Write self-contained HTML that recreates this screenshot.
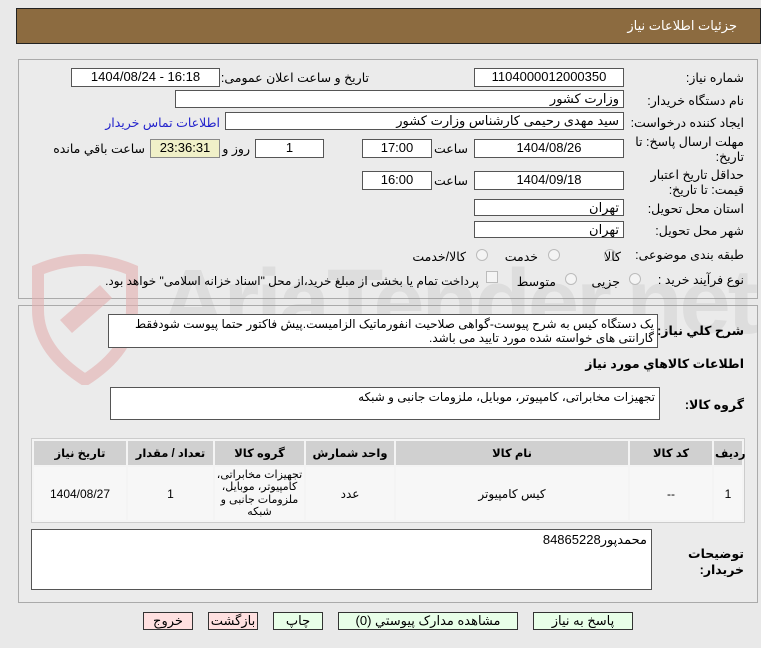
<!DOCTYPE html>
<html><head><meta charset="utf-8"><style>
*{box-sizing:border-box}
body{margin:0;width:761px;height:648px;background:#e9e9e9;font-family:"Liberation Sans","DejaVu Sans",sans-serif;font-size:12px;color:#000;position:relative;overflow:hidden}
.a{position:absolute}
.box{position:absolute;background:#fff;border:1px solid #555;font-size:13px;text-align:center;line-height:16px;white-space:nowrap}
.r{text-align:right;padding-right:4px}
.l{position:absolute;font-size:12.5px;white-space:nowrap;direction:rtl}
.rad{position:absolute;width:12px;height:12px;border:1px solid #bbb;border-radius:50%;background:#f4f4f4}
.btn{position:absolute;top:612px;height:18px;border:1px solid #333;background:#e8ffe8;font-size:13px;text-align:center;line-height:16px}
table{position:absolute;border-collapse:separate;border-spacing:2px;background:#f4f4f4;border:1px solid #ccc;table-layout:fixed}
th{background:#d0d0d0;font-weight:bold;height:24px;font-size:11.5px}
td{background:#f7f7f7;text-align:center;font-size:12px;height:53px;overflow:hidden}
</style></head><body dir="ltr">
<div class="a" style="left:16px;top:8px;width:745px;height:36px;background:#8c6b40;border:1px solid #222"></div>
<div class="l" style="right:24px;top:18px;color:#fff;font-size:13px">جزئیات اطلاعات نیاز</div>

<div class="a" style="left:18px;top:59px;width:740px;height:240px;border:1px solid #aaa;background:#ebebeb"></div>
<div class="a" style="left:18px;top:305px;width:740px;height:298px;border:1px solid #aaa;background:#ebebeb"></div>

<!-- watermark -->
<svg class="a" style="left:20px;top:250px;opacity:0.6" width="130" height="135"><path d="M18 20 Q65 0 112 20 L112 60 Q112 100 65 130 Q18 100 18 60Z" fill="none" stroke="#e3b0b0" stroke-width="12"/><path d="M40 70 L80 35 L92 48 L52 83Z" fill="#e3b0b0"/></svg>
<div class="a" style="left:160px;top:250px;font-size:92px;font-weight:bold;color:rgba(150,150,150,0.16);letter-spacing:-3px">AriaTender.net</div>

<div class="l" style="right:17px;top:70px">شماره نیاز:</div>
<div class="box" style="left:474px;top:68px;width:150px;height:19px">1104000012000350</div>
<div class="l" style="right:392px;top:70px">تاریخ و ساعت اعلان عمومی:</div>
<div class="box" style="left:71px;top:68px;width:149px;height:19px">1404/08/24 - 16:18</div>

<div class="l" style="right:17px;top:93px">نام دستگاه خریدار:</div>
<div class="box r" style="left:175px;top:90px;width:449px;height:18px" dir="rtl">وزارت کشور</div>

<div class="l" style="right:17px;top:115px">ایجاد کننده درخواست:</div>
<div class="box r" style="left:225px;top:112px;width:399px;height:18px" dir="rtl">سید مهدی رحیمی کارشناس وزارت کشور</div>
<div class="l" style="right:541px;top:115px;color:#2222cc">اطلاعات تماس خریدار</div>

<div class="l" style="right:17px;top:135px;line-height:15px;text-align:right">مهلت ارسال پاسخ: تا<br>تاریخ:</div>
<div class="box" style="left:474px;top:139px;width:150px;height:19px">1404/08/26</div>
<div class="l" style="right:293px;top:141px">ساعت</div>
<div class="box" style="left:362px;top:139px;width:70px;height:19px">17:00</div>
<div class="box" style="left:255px;top:139px;width:69px;height:19px">1</div>
<div class="l" style="right:511px;top:141px">روز و</div>
<div class="box" style="left:150px;top:139px;width:70px;height:19px;background:#f0f0c8;border-color:#888">23:36:31</div>
<div class="l" style="right:616px;top:141px">ساعت باقي مانده</div>

<div class="l" style="right:17px;top:168px;line-height:15px;text-align:right">حداقل تاریخ اعتبار<br>قیمت: تا تاریخ:</div>
<div class="box" style="left:474px;top:171px;width:150px;height:19px">1404/09/18</div>
<div class="l" style="right:293px;top:173px">ساعت</div>
<div class="box" style="left:362px;top:171px;width:70px;height:19px">16:00</div>

<div class="l" style="right:17px;top:201px">استان محل تحویل:</div>
<div class="box r" style="left:474px;top:199px;width:150px;height:17px" dir="rtl">تهران</div>
<div class="l" style="right:17px;top:223px">شهر محل تحویل:</div>
<div class="box r" style="left:474px;top:221px;width:150px;height:17px" dir="rtl">تهران</div>

<div class="l" style="right:17px;top:247px">طبقه بندی موضوعی:</div>
<div class="rad" style="left:604px;top:249px"></div><div class="l" style="right:140px;top:249px">کالا</div>
<div class="rad" style="left:548px;top:249px"></div><div class="l" style="right:223px;top:249px">خدمت</div>
<div class="rad" style="left:476px;top:249px"></div><div class="l" style="right:295px;top:249px">کالا/خدمت</div>

<div class="l" style="right:17px;top:272px">نوع فرآیند خرید :</div>
<div class="rad" style="left:629px;top:273px"></div><div class="l" style="right:141px;top:274px">جزیی</div>
<div class="rad" style="left:565px;top:273px"></div><div class="l" style="right:205px;top:274px">متوسط</div>
<div class="a" style="left:486px;top:271px;width:12px;height:12px;border:1px solid #bbb;background:#f4f4f4"></div>
<div class="l" style="right:282px;top:274px;font-size:12px">پرداخت تمام یا بخشی از مبلغ خرید،از محل "اسناد خزانه اسلامی" خواهد بود.</div>

<div class="l" style="right:17px;top:323px;font-weight:bold">شرح کلي نیاز:</div>
<div class="box" style="left:108px;top:314px;width:550px;height:34px;text-align:right;white-space:normal;line-height:14px;padding:2px 3px;direction:rtl;font-size:12px;letter-spacing:-0.2px">یک دستگاه کیس به شرح پیوست-گواهی صلاحیت انفورماتیک الزامیست.پیش فاکتور حتما پیوست شودفقط گارانتی های خواسته شده مورد تایید می باشد.</div>
<div class="l" style="right:17px;top:356px;font-weight:bold">اطلاعات کالاهاي مورد نیاز</div>
<div class="l" style="right:17px;top:397px;font-weight:bold">گروه کالا:</div>
<div class="box r" style="left:110px;top:387px;width:550px;height:33px;text-align:right;padding-top:1px;font-size:12px" dir="rtl">تجهیزات مخابراتی، کامپیوتر، موبایل، ملزومات جانبی و شبکه</div>

<table style="left:31px;top:438px;width:714px;height:85px" dir="ltr">
<colgroup><col style="width:92px"><col style="width:85px"><col style="width:89px"><col style="width:88px"><col><col style="width:82px"><col style="width:28px"></colgroup>
<tr><th>تاریخ نیاز</th><th>تعداد / مقدار</th><th>گروه کالا</th><th>واحد شمارش</th><th>نام کالا</th><th>کد کالا</th><th>ردیف</th></tr>
<tr><td>1404/08/27</td><td>1</td><td style="line-height:12.5px;font-size:11px" dir="rtl">تجهیزات مخابراتی، کامپیوتر، موبایل، ملزومات جانبی و شبکه</td><td>عدد</td><td>کیس کامپیوتر</td><td>--</td><td>1</td></tr>
</table>

<div class="l" style="right:17px;top:546px;font-weight:bold;line-height:16px;text-align:right">توضیحات<br>خریدار:</div>
<div class="box r" style="left:31px;top:529px;width:621px;height:61px;text-align:right;padding-top:2px">84865228محمدپور</div>

<div class="btn" style="left:143px;width:50px;background:#ffe0e0">خروج</div>
<div class="btn" style="left:208px;width:50px;background:#ffe0e0">بازگشت</div>
<div class="btn" style="left:273px;width:50px">چاپ</div>
<div class="btn" style="left:338px;width:180px">مشاهده مدارک پیوستي (0)</div>
<div class="btn" style="left:533px;width:100px">پاسخ به نیاز</div>
</body></html>
